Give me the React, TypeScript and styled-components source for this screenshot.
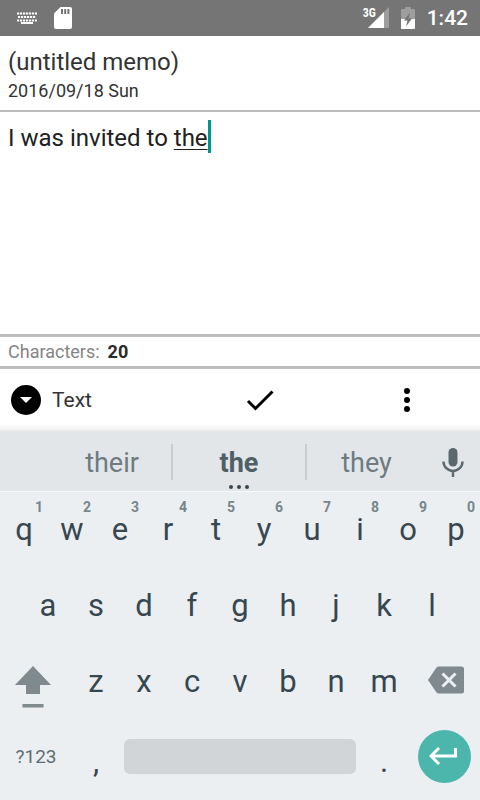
import React, { useState } from "react";
import styled, { createGlobalStyle } from "styled-components";

const GlobalStyle = createGlobalStyle`
  *, *::before, *::after { box-sizing: border-box; }
  body { margin: 0; background: #fff; font-family: Roboto, sans-serif; }
  button { margin: 0; padding: 0; border: 0; background: none; font: inherit; color: inherit; cursor: pointer; }
  svg { display: block; flex: none; }
`;

const Screen = styled.div`
  display: flex;
  flex-direction: column;
  min-height: 100vh;
  background: #fff;
`;

const StatusBar = styled.header`
  display: flex;
  justify-content: space-between;
  align-items: center;
  height: 36px;
  padding: 0 12px 0 16px;
  background: #757575;
  color: #fff;
`;

const StatusGroup = styled.div<{ $gap: number }>`
  display: flex;
  align-items: center;
  gap: ${(p) => p.$gap}px;
`;

const Clock = styled.time`
  padding-top: 1px;
  font-size: 21px;
  line-height: 35px;
  font-weight: 500;
`;

const MemoHeader = styled.div`
  padding: 12px 8px 8px;
  border-bottom: 2px solid #bdbdbd;
  color: #333;
`;

const MemoTitle = styled.h1`
  margin: 0;
  font-size: 24px;
  line-height: 28px;
  font-weight: 400;
`;

const MemoDate = styled.p`
  margin: 4px 0 0;
  font-size: 18px;
  line-height: 22px;
`;

const Editor = styled.div`
  position: relative;
  display: flex;
  flex: 1;
  min-height: 120px;
  font-size: 24px;
  line-height: 28px;
`;

const MemoInput = styled.textarea`
  flex: 1;
  min-width: 0;
  padding: 12px 8px;
  border: 0;
  outline: 0;
  resize: none;
  background: transparent;
  color: #212121;
  caret-color: #009688;
  font: inherit;
`;

const Composition = styled.div`
  position: absolute;
  inset: 0;
  padding: 12px 8px;
  overflow: hidden;
  white-space: pre-wrap;
  color: transparent;
  pointer-events: none;
`;

const ComposingWord = styled.span`
  position: relative;
  text-decoration: underline 1px #212121;
  text-underline-offset: 3px;
  text-decoration-skip-ink: none;
`;

const Caret = styled.span`
  position: absolute;
  left: 100%;
  top: -4px;
  width: 3px;
  height: 33px;
  background: #009688;
`;

const CountBar = styled.div`
  display: flex;
  gap: 8px;
  padding: 1px 8px 0;
  border: solid #bdbdbd;
  border-width: 3px 0;
  font-size: 18px;
  line-height: 28px;
  color: #858585;
`;

const Count = styled.strong`
  font-weight: 700;
  color: #2b2b2b;
`;

const Toolbar = styled.div`
  display: grid;
  grid-template-columns: 187fr 146fr 147fr;
  align-items: center;
  height: 63px;
  padding-bottom: 1px;
  background: linear-gradient(#fff 54px, #f4f4f4 60px, #e4e5e6);
  color: #000;
`;

const ModeButton = styled.button`
  display: flex;
  align-items: center;
  gap: 11px;
  padding-left: 11px;
  font-size: 21px;
  line-height: 30px;
  color: #333;
`;

const ToolButton = styled.button`
  display: flex;
  justify-content: center;
`;

const Keyboard = styled.div`
  background: #ebeff2;
  color: #37474f;
`;

const Suggestions = styled.div`
  display: grid;
  grid-template-columns: 39fr 134fr 134fr 119fr 54fr;
  align-items: center;
  height: 60px;
  padding-top: 1px;
  border-bottom: 1px solid #f6f8f9;
  background: #e2e6e9;
`;

const Suggestion = styled.button<{ $main?: boolean; $first?: boolean; $last?: boolean }>`
  position: relative;
  grid-column-start: ${(p) => (p.$first ? 2 : "auto")};
  height: 36px;
  padding-top: 2px;
  padding-left: ${(p) => (p.$first ? 14 : 0)}px;
  border-right: ${(p) => (p.$last ? 0 : 2)}px solid #c8cdd0;
  font-size: 27px;
  line-height: 34px;
  font-weight: ${(p) => (p.$main ? 700 : 400)};
  color: ${(p) => (p.$main ? "#4f5f66" : "#6e7b80")};
`;

const MoreDots = styled.svg`
  position: absolute;
  left: 50%;
  bottom: -9px;
  margin-left: -10px;
`;

const MicButton = styled.button`
  display: flex;
  justify-content: center;
`;

const KeyRow = styled.div<{ $columns: string; $inset?: boolean }>`
  display: grid;
  grid-template-columns: ${(p) => p.$columns};
  height: 76px;
  padding: 0 ${(p) => (p.$inset ? "5%" : "0")};
`;

const Key = styled.button`
  position: relative;
  display: flex;
  justify-content: center;
  align-items: center;
  min-width: 0;
  font-size: 31px;
  line-height: 36px;
`;

const PunctuationKey = styled(Key)`
  padding-top: 8px;
`;

const KeyHint = styled.span`
  position: absolute;
  top: 7px;
  right: 5px;
  font-size: 14px;
  line-height: 16px;
  font-weight: 700;
  color: #78858a;
`;

const ShiftKey = styled(Key)`
  padding: 9px 6px 0 0;
  color: #808a8e;
`;

const DeleteKey = styled(Key)`
  padding: 0 0 4px 4px;
  color: #808a8e;
`;

const SymbolKey = styled(Key)`
  padding-bottom: 2px;
  font-size: 19px;
  color: #5f6d73;
`;

const SpaceKey = styled.button`
  height: 35px;
  margin: 0 4px 4px;
  align-self: center;
  border-radius: 6px;
  background: #d1d5d8;
`;

const EnterKey = styled(Key)`
  padding-bottom: 4px;
`;

const EnterDisc = styled.span`
  display: flex;
  justify-content: center;
  align-items: center;
  width: 53px;
  height: 53px;
  border-radius: 50%;
  background: #4db6ac;
`;

const KeyboardFoot = styled.div`
  height: 4px;
`;

function KeyboardIcon() {
  return (
    <svg width="22" height="12" viewBox="0 0 22 12" fill="none" stroke="#fff" aria-hidden="true">
      <path d="M1 1.5h20M1 8.5h20" strokeWidth="2" strokeDasharray="2.2 0.8" />
      <path d="M2 5h18" strokeWidth="2" strokeDasharray="2.2 0.8" />
      <path d="M5 11h12" strokeWidth="2" />
    </svg>
  );
}

function SdIcon() {
  return (
    <svg width="18" height="22" viewBox="0 0 18 22" aria-hidden="true">
      <path d="M6.500 0H16a2 2 0 0 1 2 2v18a2 2 0 0 1-2 2H2a2 2 0 0 1-2-2V6.500z" fill="#fff" />
      <path d="M7 2h2v5H7zM10.200 2h2v5h-2zM13.400 2h2v5h-2z" fill="#757575" />
    </svg>
  );
}

const SignalBox = styled.span`
  position: relative;
  display: block;
`;

const NetworkLabel = styled.span`
  position: absolute;
  left: 0;
  top: 0;
  font-size: 12px;
  line-height: 12px;
  font-weight: 700;
  font-family: "Roboto Condensed", Roboto, sans-serif;
`;

function Signal() {
  return (
    <SignalBox>
      <svg width="26" height="22" viewBox="0 0 26 22" aria-hidden="true">
        <path d="M26 0v21H5z" fill="#9e9e9e" />
        <path d="M21 5v16H5z" fill="#fff" />
        <path d="M0 0h15v11H0z" fill="#757575" />
      </svg>
      <NetworkLabel>3G</NetworkLabel>
    </SignalBox>
  );
}

function BatteryIcon() {
  return (
    <svg width="14" height="22" viewBox="0 0 14 22" aria-hidden="true">
      <path d="M4 0h6v2h3a1 1 0 0 1 1 1v9H0V3a1 1 0 0 1 1-1h3z" fill="#9e9e9e" />
      <path d="M0 12h14v9a1 1 0 0 1-1 1H1a1 1 0 0 1-1-1z" fill="#fff" />
      <path d="M9 5.500L3 13.500h3.500L5 19.500l6-8H7.500z" fill="#757575" />
    </svg>
  );
}

function ChevronDisc() {
  return (
    <svg width="30" height="30" viewBox="0 0 30 30" aria-hidden="true">
      <circle cx="15" cy="15" r="15" fill="#000" />
      <path d="M9 12h12l-6 6z" fill="#fff" />
    </svg>
  );
}

function CheckIcon() {
  return (
    <svg width="28" height="22" viewBox="0 0 28 22" fill="none" stroke="#000" strokeWidth="3" aria-hidden="true">
      <path d="M2 12l7.500 7.500L26.500 2.500" />
    </svg>
  );
}

function OverflowIcon() {
  return (
    <svg width="6" height="24" viewBox="0 0 6 24" fill="#000" aria-hidden="true">
      <circle cx="3" cy="3" r="3" />
      <circle cx="3" cy="12" r="3" />
      <circle cx="3" cy="21" r="3" />
    </svg>
  );
}

function MicIcon() {
  return (
    <svg width="22" height="29" viewBox="0 0 22 29" aria-hidden="true">
      <rect x="6.500" y="0" width="9" height="18.500" rx="4.500" fill="#5b696f" />
      <path d="M1.500 13.500a9.500 9.500 0 0 0 19 0M11 23v6" fill="none" stroke="#5b696f" strokeWidth="2.400" />
    </svg>
  );
}

function ShiftIcon() {
  return (
    <svg width="36" height="42" viewBox="0 0 36 42" fill="currentColor" aria-hidden="true">
      <path d="M18 0l18 19H25v9H11v-9H0zM7.500 38h21v3.500h-21z" />
    </svg>
  );
}

function BackspaceIcon() {
  return (
    <svg width="36" height="28" viewBox="0 0 36 28" aria-hidden="true">
      <path d="M10.500 .5H33.500a2.500 2.500 0 0 1 2.500 2.500v22a2.500 2.500 0 0 1-2.500 2.500H10.500q-1.300 0-2-1L0 14 8.500 1.500q.7-1 2-1z" fill="currentColor" />
      <path d="M14.500 7.500l13 13M27.500 7.500l-13 13" stroke="#ebeff2" strokeWidth="3" />
    </svg>
  );
}

function EnterIcon() {
  return (
    <svg width="30" height="18" viewBox="0 0 30 18" fill="none" stroke="#fff" strokeWidth="3" aria-hidden="true">
      <path d="M26.500 1v8H2.500M10 1L2 9l8 8" />
    </svg>
  );
}

const TOP_ROW: [string, string][] = [
  ["q", "1"], ["w", "2"], ["e", "3"], ["r", "4"], ["t", "5"],
  ["y", "6"], ["u", "7"], ["i", "8"], ["o", "9"], ["p", "0"],
];

export default function App() {
  const [memo, setMemo] = useState("I was invited to the");
  const wordStart = memo.lastIndexOf(" ") + 1;
  const type = (text: string) => setMemo((m) => m + text);
  const choose = (word: string) => setMemo((m) => m.slice(0, m.lastIndexOf(" ") + 1) + word);

  return (
    <>
      <GlobalStyle />
      <Screen>
        <StatusBar>
          <StatusGroup $gap={16}>
            <KeyboardIcon />
            <SdIcon />
          </StatusGroup>
          <StatusGroup $gap={12}>
            <Signal />
            <BatteryIcon />
            <Clock>1:42</Clock>
          </StatusGroup>
        </StatusBar>

        <MemoHeader>
          <MemoTitle>(untitled memo)</MemoTitle>
          <MemoDate>2016/09/18 Sun</MemoDate>
        </MemoHeader>

        <Editor>
          <MemoInput aria-label="Memo" spellCheck={false} value={memo} onChange={(e) => setMemo(e.target.value)} />
          <Composition aria-hidden="true">
            {memo.slice(0, wordStart)}
            <ComposingWord>
              {memo.slice(wordStart)}
              <Caret />
            </ComposingWord>
          </Composition>
        </Editor>

        <CountBar>
          <span>Characters:</span>
          <Count>{memo.length}</Count>
        </CountBar>

        <Toolbar>
          <ModeButton type="button">
            <ChevronDisc />
            Text
          </ModeButton>
          <ToolButton type="button" aria-label="Done"><CheckIcon /></ToolButton>
          <ToolButton type="button" aria-label="More options"><OverflowIcon /></ToolButton>
        </Toolbar>

        <Keyboard>
          <Suggestions>
            <Suggestion type="button" $first onClick={() => choose("their")}>their</Suggestion>
            <Suggestion type="button" $main onClick={() => choose("the")}>
              the
              <MoreDots width="20" height="4" viewBox="0 0 20 4" fill="#37474f" aria-hidden="true">
                <circle cx="2" cy="2" r="2" />
                <circle cx="10" cy="2" r="2" />
                <circle cx="18" cy="2" r="2" />
              </MoreDots>
            </Suggestion>
            <Suggestion type="button" $last onClick={() => choose("they")}>they</Suggestion>
            <MicButton type="button" aria-label="Voice input"><MicIcon /></MicButton>
          </Suggestions>

          <KeyRow $columns="repeat(10, 1fr)">
            {TOP_ROW.map(([letter, hint]) => (
              <Key type="button" key={letter} onClick={() => type(letter)}>
                {letter}
                <KeyHint>{hint}</KeyHint>
              </Key>
            ))}
          </KeyRow>
          <KeyRow $columns="repeat(9, 1fr)" $inset>
            {[..."asdfghjkl"].map((letter) => (
              <Key type="button" key={letter} onClick={() => type(letter)}>{letter}</Key>
            ))}
          </KeyRow>
          <KeyRow $columns="3fr repeat(7, 2fr) 3fr">
            <ShiftKey type="button" aria-label="Shift"><ShiftIcon /></ShiftKey>
            {[..."zxcvbnm"].map((letter) => (
              <Key type="button" key={letter} onClick={() => type(letter)}>{letter}</Key>
            ))}
            <DeleteKey type="button" aria-label="Backspace" onClick={() => setMemo((m) => m.slice(0, -1))}>
              <BackspaceIcon />
            </DeleteKey>
          </KeyRow>
          <KeyRow $columns="3fr 2fr 10fr 2fr 3fr">
            <SymbolKey type="button">?123</SymbolKey>
            <PunctuationKey type="button" onClick={() => type(",")}>,</PunctuationKey>
            <SpaceKey type="button" aria-label="Space" onClick={() => type(" ")} />
            <PunctuationKey type="button" onClick={() => type(".")}>.</PunctuationKey>
            <EnterKey type="button" aria-label="Enter" onClick={() => type("\n")}>
              <EnterDisc><EnterIcon /></EnterDisc>
            </EnterKey>
          </KeyRow>
          <KeyboardFoot />
        </Keyboard>
      </Screen>
    </>
  );
}
